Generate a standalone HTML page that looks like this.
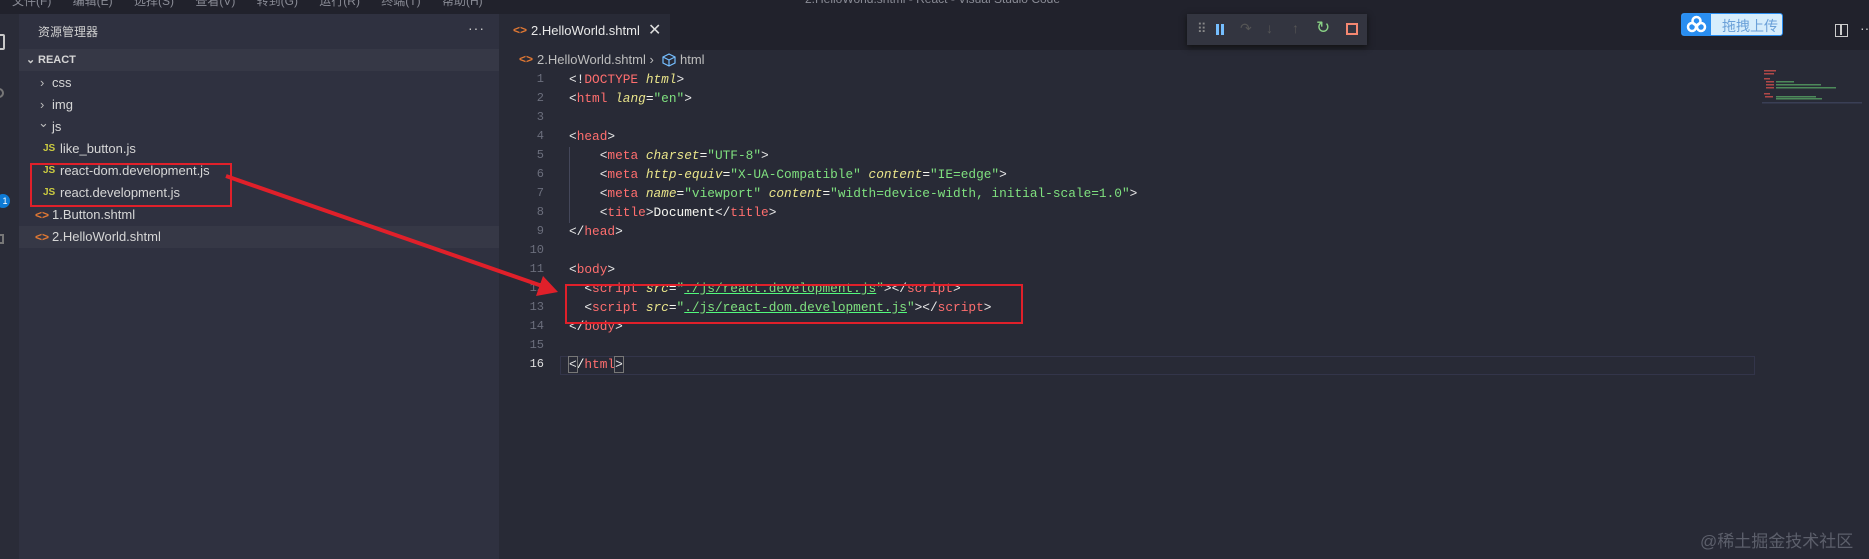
<!DOCTYPE html>
<html><head><meta charset="utf-8"><style>
*{margin:0;padding:0;box-sizing:border-box}
body{width:1869px;height:559px;overflow:hidden;background:#282a36;font-family:"Liberation Sans","Noto Sans CJK SC",sans-serif;position:relative;color:#d4d4d4}
.abs{position:absolute}
#title{left:0;top:0;width:1869px;height:14px;background:#21222c}
#act{left:0;top:14px;width:19px;height:545px;background:#2a2c38}
#side{left:19px;top:14px;width:480px;height:545px;background:#2f3140}
.row{position:absolute;left:19px;width:480px;height:22px;font-size:13px;line-height:22px;color:#d6d6d6;white-space:nowrap}
.js{color:#cbcb41;font-weight:bold;font-size:10px;position:absolute}
.ht{color:#e37933;font-size:12px;position:absolute;font-weight:bold}
.code{position:absolute;left:500px;font-family:"Liberation Mono",monospace;font-size:12.8px;line-height:19px;white-space:pre;color:#f8f8f2}
.ln{position:absolute;left:500px;width:44px;text-align:right;font-family:"Liberation Mono",monospace;font-size:12px;line-height:19px;color:#6b6e7c}
.t{color:#ff6e6e}.a{color:#e9e48a;font-style:italic}.s{color:#7fe07f}.p{color:#e8e8e8}
.u{text-decoration:underline;text-decoration-color:#50fa7b}
</style></head><body>
<div class="abs" id="title"><div class="abs" style="left:805px;top:-8px;font-size:12px;color:#8a8c96">2.HelloWorld.shtml - React - Visual Studio Code</div>
<div class="abs" style="left:12px;top:-8px;font-size:12px;color:#8a8c96;word-spacing:18px">文件(F) 编辑(E) 选择(S) 查看(V) 转到(G) 运行(R) 终端(T) 帮助(H)</div></div>
<div class="abs" id="act">
<div class="abs" style="left:-6px;top:20px;width:11px;height:16px;border:2px solid #c8c8c8;border-radius:2px"></div>
<div class="abs" style="left:-6px;top:74px;width:10px;height:10px;border:2px solid #777;border-radius:50%"></div>
<div class="abs" style="left:-6px;top:220px;width:10px;height:10px;border:2px solid #777"></div>
<div class="abs" style="left:-4px;top:180px;width:14px;height:14px;background:#0e7ad4;border-radius:50%;color:#fff;font-size:9px;line-height:14px;text-align:center;padding-left:4px">1</div>
</div>
<div class="abs" id="side"></div>
<div class="abs" style="left:38px;top:23px;font-size:12px;color:#d0d0d0">资源管理器</div>
<div class="abs" style="left:468px;top:20px;font-size:14px;color:#ccc;letter-spacing:1px">···</div>
<div class="row" style="top:49px;background:#363846;font-weight:bold;font-size:11px"><span style="position:absolute;left:7px;color:#ccc">⌄</span><span style="position:absolute;left:19px">REACT</span></div>
<div class="row" style="top:72px"><span style="position:absolute;left:21px;color:#bbb">›</span><span style="position:absolute;left:33px">css</span></div>
<div class="row" style="top:94px"><span style="position:absolute;left:21px;color:#bbb">›</span><span style="position:absolute;left:33px">img</span></div>
<div class="row" style="top:116px"><span style="position:absolute;left:19px;color:#bbb;top:-4px">⌄</span><span style="position:absolute;left:33px">js</span></div>
<div class="row" style="top:138px"><span class="js" style="left:24px">JS</span><span style="position:absolute;left:41px">like_button.js</span></div>
<div class="row" style="top:160px"><span class="js" style="left:24px">JS</span><span style="position:absolute;left:41px">react-dom.development.js</span></div>
<div class="row" style="top:182px"><span class="js" style="left:24px">JS</span><span style="position:absolute;left:41px">react.development.js</span></div>
<div class="row" style="top:204px"><span class="ht" style="left:16px">&lt;&gt;</span><span style="position:absolute;left:33px">1.Button.shtml</span></div>
<div class="row" style="top:226px;background:#363846"><span class="ht" style="left:16px">&lt;&gt;</span><span style="position:absolute;left:33px">2.HelloWorld.shtml</span></div>
<div class="abs" style="left:30px;top:163px;width:202px;height:44px;border:2px solid #e0202a"></div>
<!-- tabs -->
<div class="abs" style="left:500px;top:14px;width:1369px;height:36px;background:#21222c"></div>
<div class="abs" style="left:500px;top:14px;width:170px;height:36px;background:#282a36"></div>
<div class="abs" style="left:513px;top:23px;font-size:12px;color:#e37933;font-weight:bold">&lt;&gt;</div>
<div class="abs" style="left:531px;top:23px;font-size:13px;color:#e8e8e8">2.HelloWorld.shtml</div>
<div class="abs" style="left:648px;top:20px;font-size:16px;color:#ddd">✕</div>
<div class="abs" style="left:519px;top:52px;font-size:12px;color:#e37933;font-weight:bold">&lt;&gt;</div>
<div class="abs" style="left:537px;top:52px;font-size:13px;color:#bdbdbd">2.HelloWorld.shtml ›</div>
<svg class="abs" style="left:662px;top:53px" width="14" height="14" viewBox="0 0 14 14"><path d="M7 1L13 4V10L7 13L1 10V4Z M1 4L7 7L13 4 M7 7V13" fill="none" stroke="#75beff" stroke-width="1.2"/></svg>
<div class="abs" style="left:680px;top:52px;font-size:13px;color:#bdbdbd">html</div>
<!-- debug toolbar -->
<div class="abs" style="left:1187px;top:14px;width:180px;height:31px;background:#333540;box-shadow:0 2px 6px #111"></div>
<div class="abs" style="left:1197px;top:21px;font-size:13px;color:#888">⠿</div>
<div class="abs" style="left:1216px;top:24px;width:3px;height:11px;background:#75beff;box-shadow:5px 0 0 #75beff"></div>
<div class="abs" style="left:1240px;top:20px;font-size:14px;color:#555">↷</div>
<div class="abs" style="left:1266px;top:20px;font-size:14px;color:#555">↓</div>
<div class="abs" style="left:1292px;top:20px;font-size:14px;color:#555">↑</div>
<div class="abs" style="left:1316px;top:18px;font-size:17px;color:#89d185">↻</div>
<div class="abs" style="left:1346px;top:23px;width:12px;height:12px;border:2px solid #f48771"></div>
<!-- baidu -->
<div class="abs" style="left:1681px;top:13px;width:102px;height:23px;border-radius:3px;background:#d6edfc;border:1px solid #2a8ef0;overflow:hidden"><div style="width:29px;height:23px;background:#2a8ef0"><svg width="29" height="21" viewBox="0 0 29 21"><circle cx="14.5" cy="7" r="4" fill="none" stroke="#fff" stroke-width="2.5"/><circle cx="10" cy="13" r="4" fill="none" stroke="#fff" stroke-width="2.5"/><circle cx="19" cy="13" r="4" fill="none" stroke="#fff" stroke-width="2.5"/></svg></div><div class="abs" style="left:40px;top:2px;font-size:14px;color:#6aa0d8">拖拽上传</div></div>
<div class="abs" style="left:1835px;top:24px;width:13px;height:13px;border:1.5px solid #ccc"><div style="margin-left:4px;width:1.5px;height:10px;background:#ccc"></div></div>
<div class="abs" style="left:1860px;top:20px;font-size:14px;color:#ccc">··</div>
<!-- minimap -->
<svg class="abs" style="left:1762px;top:68px" width="100" height="36"><g fill="#b04848"><rect x="2" y="2" width="12" height="1.5"/><rect x="2" y="5" width="10" height="1.5"/><rect x="2" y="10" width="6" height="1.5"/><rect x="4" y="13" width="8" height="1.5"/><rect x="4" y="16" width="8" height="1.5"/><rect x="4" y="19" width="8" height="1.5"/><rect x="2" y="25" width="6" height="1.5"/><rect x="3" y="28" width="8" height="1.5"/></g><g fill="#4d8a5a"><rect x="14" y="13" width="18" height="1.5"/><rect x="14" y="16" width="45" height="1.5"/><rect x="14" y="19" width="60" height="1.5"/><rect x="14" y="28" width="40" height="1.5"/><rect x="14" y="30" width="46" height="1.5"/></g><rect x="0" y="34" width="100" height="1.5" fill="#3a3f55"/></svg>
<!-- editor -->
<div class="abs" style="left:560px;top:356px;width:1195px;height:19px;border:1px solid #33354a"></div>
<div class="ln" style="top:70px">1<br>2<br>3<br>4<br>5<br>6<br>7<br>8<br>9<br>10<br>11<br>12<br>13<br>14<br>15<br><span style="color:#ddd">16</span></div>
<div class="abs" style="left:569px;top:147px;width:1px;height:76px;background:#44475a"></div>
<div class="code" style="top:70px;left:569px"><span class="p">&lt;!</span><span class="t">DOCTYPE</span> <span class="a">html</span><span class="p">&gt;</span>
<span class="p">&lt;</span><span class="t">html</span> <span class="a">lang</span>=<span class="s">"en"</span><span class="p">&gt;</span>

<span class="p">&lt;</span><span class="t">head</span><span class="p">&gt;</span>
    <span class="p">&lt;</span><span class="t">meta</span> <span class="a">charset</span>=<span class="s">"UTF-8"</span><span class="p">&gt;</span>
    <span class="p">&lt;</span><span class="t">meta</span> <span class="a">http-equiv</span>=<span class="s">"X-UA-Compatible"</span> <span class="a">content</span>=<span class="s">"IE=edge"</span><span class="p">&gt;</span>
    <span class="p">&lt;</span><span class="t">meta</span> <span class="a">name</span>=<span class="s">"viewport"</span> <span class="a">content</span>=<span class="s">"width=device-width, initial-scale=1.0"</span><span class="p">&gt;</span>
    <span class="p">&lt;</span><span class="t">title</span><span class="p">&gt;</span>Document<span class="p">&lt;/</span><span class="t">title</span><span class="p">&gt;</span>
<span class="p">&lt;/</span><span class="t">head</span><span class="p">&gt;</span>

<span class="p">&lt;</span><span class="t">body</span><span class="p">&gt;</span>
  <span class="p">&lt;</span><span class="t">script</span> <span class="a">src</span>=<span class="s">"<span class="u">./js/react.development.js</span>"</span><span class="p">&gt;&lt;/</span><span class="t">script</span><span class="p">&gt;</span>
  <span class="p">&lt;</span><span class="t">script</span> <span class="a">src</span>=<span class="s">"<span class="u">./js/react-dom.development.js</span>"</span><span class="p">&gt;&lt;/</span><span class="t">script</span><span class="p">&gt;</span>
<span class="p">&lt;/</span><span class="t">body</span><span class="p">&gt;</span>

<span class="p" style="outline:1px solid #777">&lt;</span>/<span class="t">html</span><span class="p" style="outline:1px solid #777">&gt;</span></div>
<div class="abs" style="left:565px;top:284px;width:458px;height:40px;border:2px solid #e0202a"></div>
<!-- arrow -->
<svg class="abs" style="left:0;top:0" width="1869" height="559"><line x1="226" y1="176" x2="545" y2="287" stroke="#e0202a" stroke-width="4"/><polygon points="558,292 536,296 543,276" fill="#e0202a"/></svg>
<div class="abs" style="left:1700px;top:527px;font-size:17px;color:#5c5f6b">@稀土掘金技术社区</div>
</body></html>
